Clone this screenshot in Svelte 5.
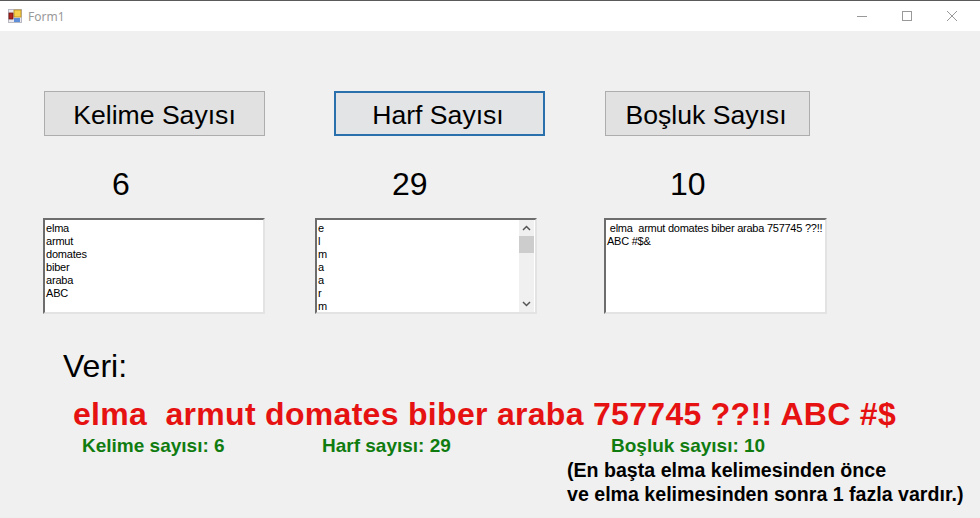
<script>
  const words = ['elma', 'armut', 'domates', 'biber', 'araba', 'ABC'];
  const letters = ['e', 'l', 'm', 'a', 'a', 'r', 'm'];
  const memo = ' elma  armut domates biber araba 757745 ??!! ABC #$&';
  const veri = 'elma  armut domates biber araba 757745 ??!! ABC #$';
</script>

<div class="window">
  <header class="titlebar">
    <svg class="app-icon" width="14" height="14" viewBox="0 0 14 14">
      <rect x="0.5" y="0.5" width="13" height="13" fill="#e8e8ee" stroke="#b9b9c4" />
      <rect x="6" y="1" width="7" height="7" fill="#f6cf4c" stroke="#b98a1c" stroke-width="0.8" />
      <rect x="1" y="4" width="4" height="6" fill="#b3261e" stroke="#6e1510" stroke-width="0.8" />
      <rect x="6" y="9" width="6" height="4" fill="#5f8fd8" />
    </svg>
    <span class="title">Form1</span>
    <div class="controls">
      <svg width="12" height="12" viewBox="0 0 12 12"><path d="M1 6.500h10" stroke="#999" /></svg>
      <svg width="12" height="12" viewBox="0 0 12 12"><rect x="1.500" y="1.500" width="9" height="9" fill="none" stroke="#999" /></svg>
      <svg width="12" height="12" viewBox="0 0 12 12"><path d="M1 1l10 10M11 1L1 11" stroke="#999" /></svg>
    </div>
  </header>

  <main class="form">
    <div class="row buttons">
      <button class="btn kelime">Kelime Sayısı</button>
      <button class="btn harf">Harf Sayısı</button>
      <button class="btn bosluk">Boşluk Sayısı</button>
    </div>

    <div class="row counts">
      <span class="count c1">6</span>
      <span class="count c2">29</span>
      <span class="count c3">10</span>
    </div>

    <div class="row boxes">
      <ul class="box">
        {#each words as w}<li>{w}</li>{/each}
      </ul>
      <div class="box scrolling">
        <ul>
          {#each letters as l}<li>{l}</li>{/each}
        </ul>
        <div class="scrollbar">
          <svg width="15" height="16" viewBox="0 0 15 16"><path d="M4 10l3.500-3.500L11 10" fill="none" stroke="#555" stroke-width="1.500" /></svg>
          <div class="thumb"></div>
          <svg class="down" width="15" height="16" viewBox="0 0 15 16"><path d="M4 6l3.500 3.500L11 6" fill="none" stroke="#555" stroke-width="1.500" /></svg>
        </div>
      </div>
      <div class="box memo">{memo}</div>
    </div>

    <div class="veri-label">Veri:</div>
    <div class="veri">{veri}</div>

    <div class="row results">
      <span class="result r1">Kelime sayısı: 6</span>
      <span class="result r2">Harf sayısı: 29</span>
      <span class="result r3">Boşluk sayısı: 10</span>
    </div>

    <p class="note">(En başta elma kelimesinden önce<br />ve elma kelimesinden sonra 1 fazla vardır.)</p>
  </main>
</div>

<style>
  :global(body) {
    margin: 0;
    background: #f0f0f0;
  }

  .window {
    width: 980px;
    height: 518px;
    overflow: hidden;
    font-family: 'Liberation Sans', Arial, sans-serif;
    color: #000;
    background: #f0f0f0;
  }

  .titlebar {
    display: flex;
    align-items: center;
    height: 30px;
    background: #fff;
    border-top: 1px solid #5a5a5a;
    padding-left: 8px;
  }

  .app-icon {
    margin-right: 6px;
  }

  .title {
    font-family: 'Noto Sans', sans-serif;
    font-size: 12px;
    color: #999;
  }

  .controls {
    margin-left: auto;
    display: flex;
    gap: 33px;
    padding-right: 22px;
  }

  .form {
    padding-top: 60px;
  }

  .row {
    display: flex;
  }

  .buttons {
    padding-left: 44px;
  }

  .btn {
    box-sizing: border-box;
    height: 45px;
    padding: 3px 0 0;
    background: #e1e1e1;
    border: 1px solid #adadad;
    font-family: inherit;
    font-size: 26.6px;
    color: #000;
  }

  .kelime {
    width: 221px;
    margin-right: 69px;
  }

  .harf {
    width: 211px;
    margin-right: 60px;
    padding-right: 3px;
    border: 2px solid #2a70ad;
    background: #e3e4e6;
  }

  .bosluk {
    width: 205px;
    padding-right: 3px;
  }

  .counts {
    margin-top: 29px;
    height: 40px;
    line-height: 38px;
    font-size: 32px;
  }

  .c1 {
    margin-left: 112px;
    width: 280px;
  }

  .c2 {
    width: 278px;
  }

  .boxes {
    margin-top: 13px;
    padding-left: 43px;
    gap: 50px;
  }

  .box {
    box-sizing: border-box;
    width: 222px;
    height: 96px;
    margin: 0;
    padding: 2px 0 0 1px;
    list-style: none;
    background: #fff;
    border: 2px solid;
    border-color: #6d6d6d #e3e3e3 #e3e3e3 #6d6d6d;
    font-size: 11px;
    line-height: 13px;
    letter-spacing: -0.2px;
  }

  .boxes .box + .box + .box {
    margin-left: 17px;
    width: 223px;
  }

  .box ul {
    margin: 0;
    padding: 0;
    list-style: none;
  }

  .scrolling {
    display: flex;
    justify-content: space-between;
    padding: 0;
    overflow: hidden;
  }

  .scrolling ul {
    padding: 2px 0 0 1px;
  }

  .scrollbar {
    width: 15px;
    margin-right: 1px;
    background: #f0f0f0;
    display: flex;
    flex-direction: column;
  }

  .scrollbar svg {
    display: block;
  }

  .thumb {
    height: 17px;
    background: #cdcdcd;
  }

  .down {
    margin-top: auto;
  }

  .memo {
    padding: 2px 1px 0 1px;
    white-space: pre-wrap;
    letter-spacing: -0.25px;
  }

  .veri-label {
    margin: 32px 0 0 63px;
    font-size: 32px;
    line-height: 40px;
  }

  .veri {
    margin: 10px 0 0 73px;
    font-size: 32px;
    font-weight: 700;
    letter-spacing: 0.3px;
    line-height: 36px;
    color: #e61212;
    white-space: pre;
  }

  .results {
    margin-top: 3px;
    font-size: 19px;
    font-weight: 700;
    line-height: 21px;
    color: #107c10;
  }

  .r1 {
    margin-left: 82px;
    width: 240px;
  }

  .r2 {
    width: 289px;
  }

  .note {
    margin: 2px 0 0 567px;
    font-size: 19.6px;
    font-weight: 700;
    line-height: 24px;
  }
</style>
